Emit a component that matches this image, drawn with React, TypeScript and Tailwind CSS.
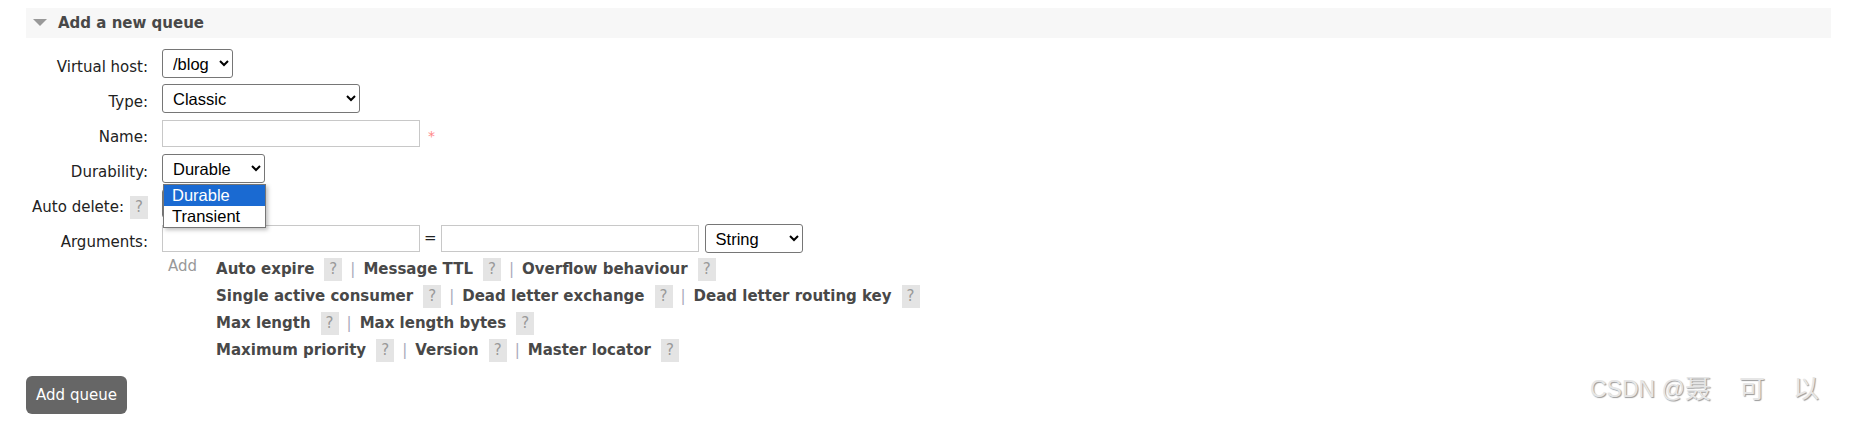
import React from 'react';

const selectCls =
  'h-[29px] border border-[#767676] rounded-[3px] bg-white pl-[6px] text-[16.5px] text-black [font-family:"Liberation_Sans",Arial,sans-serif]';
const inputCls = 'h-[27px] w-[258px] border border-[#c8c8c8] bg-white';

function Help({ className = '' }: { className?: string }) {
  return (
    <span
      className={`inline-block h-[23px] w-[18px] bg-[#e4e4e4] text-center font-normal leading-[23px] text-[#999] ${className}`}
    >
      ?
    </span>
  );
}

const argRows: string[][] = [
  ['Auto expire', 'Message TTL', 'Overflow behaviour'],
  ['Single active consumer', 'Dead letter exchange', 'Dead letter routing key'],
  ['Max length', 'Max length bytes'],
  ['Maximum priority', 'Version', 'Master locator'],
];

function Row({ label, children }: { label: React.ReactNode; children: React.ReactNode }) {
  return (
    <div className="flex h-[35px] items-center">
      <div className="flex w-[122px] shrink-0 items-center justify-end pt-[8px] text-[#222]">{label}</div>
      <div className="ml-[14px] flex items-center">{children}</div>
    </div>
  );
}

export default function App() {
  return (
    <div className="relative h-[424px] w-[1861px] overflow-hidden bg-white text-[15px] [font-family:'DejaVu_Sans',Verdana,sans-serif]">
      <div className="pl-[26px] pr-[30px]">
        {/* section header */}
        <div className="mt-[8px] flex h-[30px] items-center bg-[#f7f7f7] pl-[7px]">
          <svg width="14" height="8" viewBox="0 0 14 8" className="mr-[11px]">
            <path d="M0 0 H14 L7 7 Z" fill="#999" />
          </svg>
          <span className="font-bold text-[#484848]">Add a new queue</span>
        </div>

        <div className="mt-[8px]">
          <Row label="Virtual host:">
            <select className={`${selectCls} w-[71px]`} defaultValue="/blog">
              <option>/blog</option>
            </select>
          </Row>
          <Row label="Type:">
            <select className={`${selectCls} w-[198px]`} defaultValue="Classic">
              <option>Classic</option>
            </select>
          </Row>
          <Row label="Name:">
            <input className={inputCls} />
            <span className="ml-[8px] self-start pt-[6px] text-[14px] text-[#f88]">*</span>
          </Row>
          <Row label="Durability:">
            <div className="relative">
              <select className={`${selectCls} w-[103px]`} defaultValue="Durable">
                <option>Durable</option>
                <option>Transient</option>
              </select>
              {/* open option list */}
              <div className="absolute left-[1px] top-[30px] z-10 w-[103px] border border-[#767676] bg-white text-[16.5px] leading-[21px] text-black shadow-[2px_2px_4px_rgba(0,0,0,0.25)] [font-family:'Liberation_Sans',Arial,sans-serif]">
                <div className="bg-[#1a6ad2] pl-[8px] text-white">Durable</div>
                <div className="pl-[8px]">Transient</div>
              </div>
            </div>
          </Row>
          <Row
            label={
              <>
                <span>Auto delete:</span>
                <Help className="ml-[6px] h-[22px] leading-[22px]" />
              </>
            }
          >
            <select className={`${selectCls} w-[60px]`} defaultValue="Yes">
              <option>Yes</option>
            </select>
          </Row>
          <Row label="Arguments:">
            <input className={inputCls} />
            <span className="mx-[4px] text-[#222]">=</span>
            <input className={inputCls} />
            <select className={`${selectCls} ml-[6px] h-[28px] w-[98px]`} defaultValue="String">
              <option>String</option>
            </select>
          </Row>

          <div className="ml-[142px] flex">
            <span className="mt-[-3px] leading-[27px] text-[#999]">Add</span>
            <div className="ml-[19px] flex flex-col">
              {argRows.map((row, i) => (
                <div key={i} className="flex h-[27px] items-center font-bold text-[#484848]">
                  {row.map((item, j) => (
                    <span key={item} className="flex items-center">
                      {j > 0 && <span className="mx-[8px] font-normal text-[#aab]">|</span>}
                      <span>{item}</span>
                      <Help className="ml-[10px]" />
                    </span>
                  ))}
                </div>
              ))}
            </div>
          </div>

          <button className="mt-[12px] h-[38px] w-[101px] rounded-[6px] bg-[#666] text-[15px] text-white">
            Add queue
          </button>
        </div>
      </div>

      {/* watermark */}
      <div className="absolute left-[1590px] top-[375px] flex items-center text-[23px] leading-[28px] text-[#e6e6e6] [text-shadow:1px_1px_1px_#9a9a9a] [font-family:'Liberation_Sans','Noto_Sans_CJK_SC',sans-serif]">
        <span>CSDN @</span>
        <span className="text-[26px]">聂</span>
        <span className="ml-[28px] text-[26px]">可</span>
        <span className="ml-[28px] text-[26px]">以</span>
      </div>
    </div>
  );
}
